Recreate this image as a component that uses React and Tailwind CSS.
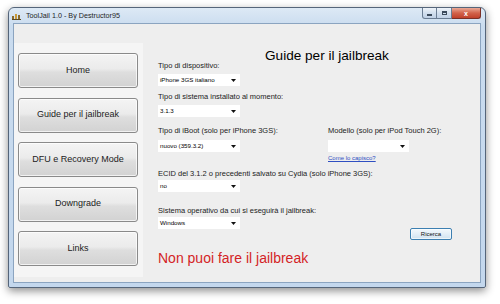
import React from 'react';

const Select = ({ value, w = 'w-[82px]' }) => (
  <div className={`${w} h-[12px] bg-white flex items-center justify-between pl-[2px] pr-[4px]`}>
    <span className="text-[6.2px] leading-none text-black whitespace-nowrap">{value}</span>
    <svg width="5" height="3" viewBox="0 0 5 3"><path d="M0 0h5L2.5 3z" fill="#111" /></svg>
  </div>
);

const Label = ({ children }) => (
  <div className="h-[10px] leading-[10px] text-[7.5px] text-[#222] whitespace-nowrap">{children}</div>
);

const NavButton = ({ children }) => (
  <button className="w-[120px] h-[35px] shrink-0 rounded-[3px] border border-[#8a8a8a] bg-[linear-gradient(#f4f4f4,#ebebeb_45%,#dedede_55%,#d2d2d2)] shadow-[inset_0_0_0_1px_rgba(255,255,255,0.7)] text-[9px] text-[#222]">
    {children}
  </button>
);

export default function App() {
  return (
    <div className="w-[500px] h-[304px] bg-white overflow-hidden pt-[7px] pl-[8px] font-['Liberation_Sans',Arial,sans-serif]">
      <div className="w-[478px] h-[281px] flex flex-col rounded-t-[6px] rounded-b-[2px] border border-[#55657a] bg-[linear-gradient(#dde9f5,#cadcef_18px,#c3d7ed)] px-[4px] pb-[4px] shadow-[0_3px_8px_rgba(0,0,0,0.45)]">
        {/* title bar */}
        <div className="h-[15px] flex items-start shrink-0">
          <svg className="mt-[5px] ml-[-1px]" width="9" height="7" viewBox="0 0 9 7">
            <rect x="0" y="3" width="2" height="4" fill="#8a6a2c" />
            <rect x="3" y="1" width="2" height="6" fill="#c99a3a" />
            <rect x="6" y="2" width="2" height="5" fill="#8a6a2c" />
            <rect x="0" y="6" width="9" height="1" fill="#5b4a22" />
          </svg>
          <span className="ml-[5px] mt-[4px] text-[7.2px] leading-[8px] text-[#1e1e1e] whitespace-nowrap">ToolJail 1.0 - By Destructor95</span>
          <div className="ml-auto flex">
            <div className="w-[15px] h-[11px] border border-[#6b7d93] border-t-0 rounded-bl-[3px] bg-[linear-gradient(#eef3f9,#d2dfee_50%,#c0d1e6)] flex items-end justify-center pb-[2px]">
              <div className="w-[5px] h-[2px] bg-[#3b4a5c]" />
            </div>
            <div className="w-[15px] h-[11px] border-b border-r border-[#6b7d93] bg-[linear-gradient(#eef3f9,#d2dfee_50%,#c0d1e6)] flex items-center justify-center">
              <div className="w-[5px] h-[4px] border border-[#3b4a5c] border-t-2" />
            </div>
            <div className="w-[29px] h-[11px] border-b border-r border-[#7a3027] rounded-br-[3px] bg-[linear-gradient(#eaa996,#d2634b_50%,#c0412b)] flex items-center justify-center text-white text-[7px] font-bold leading-none">
              x
            </div>
          </div>
        </div>

        {/* client area */}
        <div className="flex-1 flex border border-[#8ba4c0] bg-[#eeeeee]">
          <div className="w-[129px] mt-[19px] mb-[5px] bg-[#f5f5f5] flex flex-col gap-[9.5px] pl-[4px] pt-[10px]">
            <NavButton>Home</NavButton>
            <NavButton>Guide per il jailbreak</NavButton>
            <NavButton>DFU e Recovery Mode</NavButton>
            <NavButton>Downgrade</NavButton>
            <NavButton>Links</NavButton>
          </div>

          <div className="flex-1 flex flex-col pl-[15px] pt-[25px]">
            <div className="h-[12px] leading-[14px] text-[13.6px] text-black ml-[107px] whitespace-nowrap">Guide per il jailbreak</div>

            <Label>Tipo di dispositivo:</Label>
            <div className="mt-[3px]"><Select value="iPhone 3GS italiano" /></div>

            <div className="mt-[6px]"><Label>Tipo di sistema installato al momento:</Label></div>
            <div className="mt-[3px]"><Select value="3.1.3" /></div>

            <div className="mt-[9px] flex items-start">
              <div className="w-[170px]">
                <Label>Tipo di iBoot (solo per iPhone 3GS):</Label>
                <div className="mt-[4px]"><Select value="nuovo (359.3.2)" /></div>
              </div>
              <div>
                <Label>Modello (solo per iPod Touch 2G):</Label>
                <div className="mt-[4px]"><Select value="" w="w-[81px]" /></div>
                <div className="mt-[2px] h-[8px] leading-[8px] text-[6px] text-[#2f4fc2] underline whitespace-nowrap">Come lo capisco?</div>
              </div>
            </div>

            <div className="mt-[7px]"><Label>ECID del 3.1.2 o precedenti salvato su Cydia (solo iPhone 3GS):</Label></div>
            <div className="mt-[1px]"><Select value="no" /></div>

            <div className="mt-[14px] flex items-start">
              <div className="w-[170px]">
                <Label>Sistema operativo da cui si eseguirà il jailbreak:</Label>
                <div className="mt-[1px]"><Select value="Windows" /></div>
              </div>
              <button className="mt-[22px] ml-[82px] w-[42px] h-[12px] rounded-[2px] border border-[#3c7fb1] bg-[linear-gradient(#f2f8fc,#e3eef7_50%,#cfe2f0)] shadow-[inset_0_0_0_1px_rgba(255,255,255,0.6)] text-[6px] leading-none text-[#111]">
                Ricerca
              </button>
            </div>

            <div className="mt-[10px] h-[16px] leading-[16px] text-[14px] text-[#d41f26] whitespace-nowrap">Non puoi fare il jailbreak</div>
          </div>
        </div>
      </div>
    </div>
  );
}
